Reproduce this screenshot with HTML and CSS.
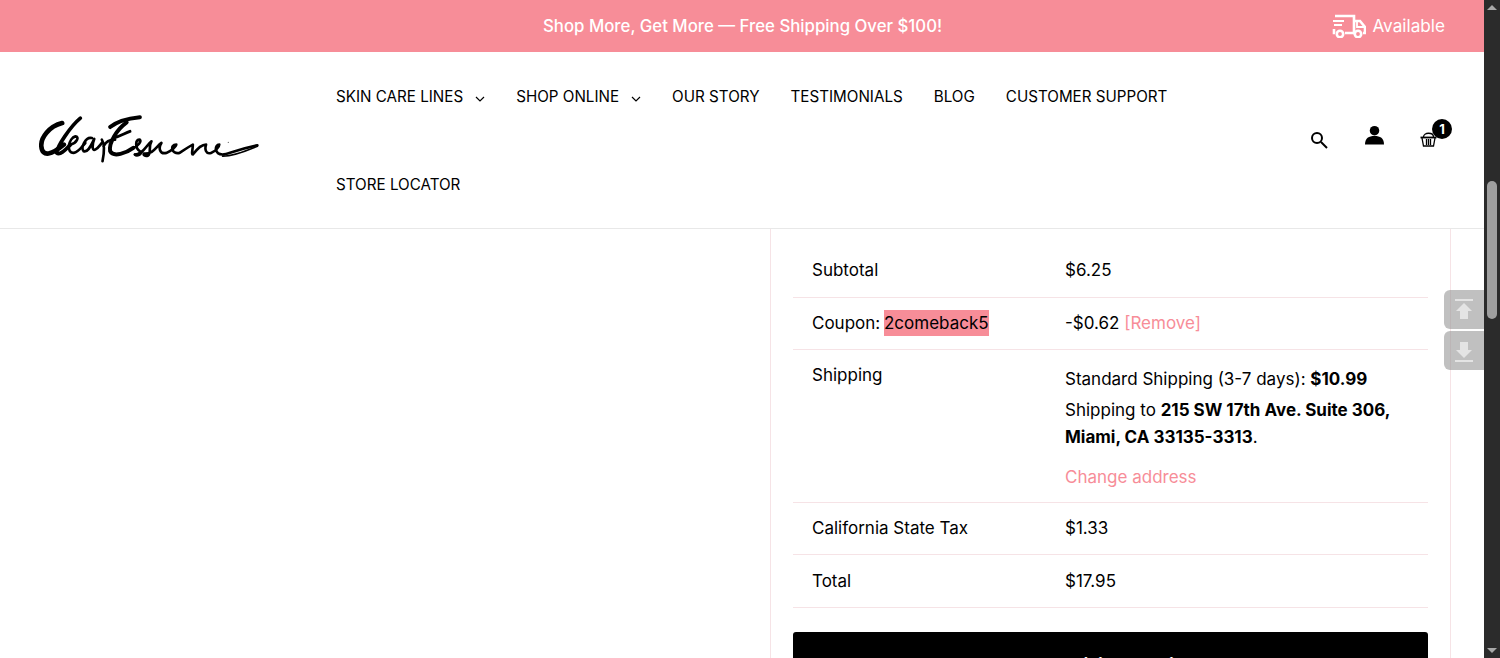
FILE: index.html
```html
<!DOCTYPE html>
<html lang="en">
<head>
  <meta charset="UTF-8" />
  <title>Checkout | Clear Essence</title>
  <link rel="stylesheet" href="styles.css">
</head>
<body>
  <div class="window">
    <div class="page">
      <div class="topbar">
        <p class="promo">Shop More, Get More — Free Shipping Over $100!</p>
        <div class="available">
          <svg class="truck" viewBox="0 0 34 24" fill="none" stroke="#fff" stroke-width="2.6">
            <path d="M3 2h19v17H13" />
            <path d="M22 7h6l5 6v6h-2" />
            <path d="M22 19h-1" />
            <path d="M25 8v5h7" stroke-width="1.8" />
            <path d="M1 7h11M2 11h8" stroke-width="2" />
            <path d="M2 15v4h1" />
            <circle cx="8" cy="20" r="3.2" />
            <circle cx="26" cy="20" r="3.2" />
          </svg>
          <span>Available</span>
        </div>
      </div>

      <header class="navbar">
        <a class="logo" href="#">
          <svg viewBox="55 70 665 150" width="220" height="50" fill="none" stroke="#000" stroke-linecap="round" stroke-linejoin="round">
            <path stroke-width="14" d="M125 100C85 110 60 145 62 170c3 35 33 25 68-5" />
            <path stroke-width="11" d="M180 85c-30 25-70 85-72 105 12 10 32-15 42-25" />
            <path stroke-width="8" d="M150 165c20-5 28-25 15-25-20 5-30 50-5 50 15-2 25-20 35-30" />
            <path stroke-width="8" d="M215 145c-20-5-35 30-25 40 15 5 25-25 32-37-7 17-7 37 3 32 10-5 15-15 20-20" />
            <path stroke-width="8" d="M245 150c10 15 5 50 2 65M250 170c10-20 25-20 35-20" />
            <path stroke-width="12" d="M360 82c-30 3-70 13-90 30" />
            <path stroke-width="12" d="M320 98c-30 22-55 62-50 87 10 20 50 5 70-10" />
            <path stroke-width="9" d="M280 145c20-5 35-15 50-20" />
            <path stroke-width="8" d="M340 175c15-5 25-20 20-25-15 0-15 25 0 35 10 10-10 15-15 10" />
            <path stroke-width="8" d="M345 195c25 0 35-30 50-40-10 15 0 35-10 43-10 4-15-3-13-6 28 3 38-22 53-32-10 15-5 35 15 30 15-5 30-20 30-25-20 0-15 30 10 25 15-10 30-20 40-25 0 15-5 30 0 30 15-20 30-30 40-30-5 15 0 30 15 25 15-5 25-20 25-25-15 0-15 30 10 30 15 0 40-15 105-28" />
            <path stroke-width="5" d="M610 200c30 0 70-15 105-30" />
            <circle cx="627" cy="158" r="1.5" fill="#000" stroke="none" />
          </svg>
        </a>
        <nav class="menu">
          <ul>
            <li><a href="#">SKIN CARE LINES<svg class="chev" viewBox="0 0 10 6"><path d="M1 1l4 4 4-4" /></svg></a></li>
            <li><a href="#">SHOP ONLINE<svg class="chev" viewBox="0 0 10 6"><path d="M1 1l4 4 4-4" /></svg></a></li>
            <li><a href="#">OUR STORY</a></li>
            <li><a href="#">TESTIMONIALS</a></li>
            <li><a href="#">BLOG</a></li>
            <li><a href="#">CUSTOMER SUPPORT</a></li>
            <li><a href="#">STORE LOCATOR</a></li>
          </ul>
        </nav>
        <div class="nav-icons">
          <svg class="icon-search" viewBox="0 0 18 18" fill="none" stroke="#000" stroke-width="2">
            <circle cx="7" cy="7" r="5" />
            <path d="M11 11l6 6" />
          </svg>
          <svg class="icon-user" viewBox="0 0 20 20" fill="#000">
            <circle cx="10" cy="5.5" r="5" />
            <path d="M0 20c0-7 4-9 10-9s10 2 10 9z" />
          </svg>
          <div class="cart">
            <svg class="icon-basket" viewBox="0 0 17 15" fill="none" stroke="#000" stroke-width="1.3">
              <path d="M3.5 5c0-5 10-5 10 0" />
              <path d="M.5 5.5h16" stroke-width="1.8" />
              <path d="M2 6l1.5 8h10L15 6M6.5 7v6M8.5 7v6M10.5 7v6" />
            </svg>
            <span class="cart-count">1</span>
          </div>
        </div>
      </header>

      <main class="content">
        <div class="left"></div>
        <section class="summary">
          <div class="row row-first">
            <div class="label">Subtotal</div>
            <div class="value">$6.25</div>
          </div>
          <div class="row">
            <div class="label">Coupon: <mark>2comeback5</mark></div>
            <div class="value">-$0.62 <a class="pink" href="#">[Remove]</a></div>
          </div>
          <div class="row row-shipping">
            <div class="label">Shipping</div>
            <div class="value">
              <p>Standard Shipping (3-7 days): <b>$10.99</b></p>
              <p>Shipping to <b>215 SW 17th Ave. Suite 306, Miami, CA 33135-3313</b>.</p>
              <a class="pink change" href="#">Change address</a>
            </div>
          </div>
          <div class="row">
            <div class="label">California State Tax</div>
            <div class="value">$1.33</div>
          </div>
          <div class="row row-total">
            <div class="label">Total</div>
            <div class="value">$17.95</div>
          </div>
          <button class="btn">Add billing details</button>
        </section>
      </main>

      <div class="jump">
        <div class="jump-btn">
          <svg viewBox="0 0 18 22" fill="#e4e4e4"><path d="M0 0h18v2H0zM9 4l8 8h-4v8H5v-8H1z" /></svg>
        </div>
        <div class="jump-btn">
          <svg viewBox="0 0 18 22" fill="#e4e4e4"><path d="M0 20h18v2H0zM9 18l8-8h-4V2H5v8H1z" /></svg>
        </div>
      </div>
    </div>

    <div class="scrollbar">
      <span class="arrow arrow-up"></span>
      <div class="track"><div class="thumb"></div></div>
      <span class="arrow arrow-down"></span>
    </div>
  </div>
</body>
</html>
```

FILE: styles.css
```css
* {
  box-sizing: border-box;
}
html, body {
  height: 100%;
  overflow: hidden;
}
body {
  margin: 0;
  background: #fff;
  color: #000;
  font-family: Inter, "Liberation Sans", sans-serif;
}
a {
  color: inherit;
  text-decoration: none;
}
.window {
  display: flex;
  height: 658px;
}
.page {
  flex: 1;
  position: relative;
  overflow: hidden;
}

/* top pink bar */
.topbar {
  height: 52px;
  background: #f78d98;
  color: #fff;
  display: flex;
  align-items: center;
  justify-content: space-between;
  padding: 0 39px 0 543px;
}
.promo {
  margin: 0;
  font-size: 16.8px;
  font-weight: 500;
}
.available {
  display: flex;
  align-items: center;
  gap: 6px;
  font-size: 17.2px;
  margin-top: -1px;
}
.truck {
  width: 34px;
  height: 24px;
}

/* header */
.navbar {
  height: 177px;
  display: flex;
  align-items: center;
  border-bottom: 1px solid #e8e8e8;
  padding-left: 39px;
}
.logo {
  width: 297px;
  display: block;
  flex-shrink: 0;
  margin-top: -5px;
}
.logo svg {
  display: block;
}
.menu {
  width: 975px;
}
.menu ul {
  list-style: none;
  margin: 0;
  padding: 0;
  display: flex;
  flex-wrap: wrap;
  column-gap: 31px;
}
.menu li {
  height: 88px;
  display: flex;
  align-items: center;
  font-size: 15.2px;
}
.chev {
  width: 10px;
  height: 6px;
  margin-left: 12px;
  fill: none;
  stroke: #000;
  stroke-width: 1.2;
}
.nav-icons {
  flex: 1;
  display: flex;
  align-items: center;
  margin-top: -2px;
}
.icon-search {
  width: 18px;
  height: 18px;
  margin: 1px 0 0 -1px;
}
.icon-user {
  width: 19px;
  height: 20px;
  margin: -8px 0 0 37px;
}
.cart {
  position: relative;
  margin: 0 0 0 36px;
  display: flex;
}
.icon-basket {
  width: 17px;
  height: 15px;
}
.cart-count {
  position: absolute;
  top: -13px;
  left: 12px;
  width: 20px;
  height: 20px;
  border-radius: 50%;
  background: #000;
  color: #fff;
  font-size: 13px;
  font-weight: 700;
  line-height: 20px;
  text-align: center;
}

/* order summary */
.content {
  display: flex;
}
.left {
  width: 770px;
}
.summary {
  width: 681px;
  height: 429px;
  padding: 16px 22px 0;
  border-left: 1px solid #f6e3e6;
  border-right: 1px solid #f6e3e6;
  font-size: 17px;
  overflow: hidden;
}
.row {
  display: flex;
  border-bottom: 1px solid #f6e3e6;
  padding: 13px 0 14px 19px;
  line-height: 24px;
}
.row-first {
  padding-bottom: 15px;
}
.row-total {
  padding: 14px 0 14px 19px;
}
.label {
  width: 253px;
  flex-shrink: 0;
}
.value {
  flex: 1;
}
.value p {
  margin: 0;
}
.row-shipping {
  padding: 13px 0 13px 19px;
}
.row-shipping .value {
  width: 330px;
  flex: none;
  padding-top: 4px;
}
.row-shipping p + p {
  margin-top: 6px;
  line-height: 27px;
}
.pink {
  color: #f78d98;
}
.change {
  display: block;
  margin-top: 14px;
}
mark {
  background: #f78d98;
  color: #000;
  margin-left: -1px;
  padding: 3px 0;
}
.btn {
  display: block;
  width: 100%;
  height: 64px;
  margin-top: 24px;
  background: #000;
  color: #fff;
  border: none;
  border-radius: 3px;
  font-family: inherit;
  font-size: 18px;
  font-weight: 700;
}

/* jump to top / bottom buttons */
.jump {
  position: absolute;
  right: 0;
  top: 290px;
  display: flex;
  flex-direction: column;
  gap: 2px;
}
.jump-btn {
  width: 40px;
  height: 39px;
  background: rgba(150, 150, 150, 0.6);
  border-radius: 6px 0 0 6px;
  display: flex;
  align-items: center;
  justify-content: center;
}
.jump-btn svg {
  width: 18px;
  height: 22px;
}

/* browser scrollbar */
.scrollbar {
  width: 16px;
  background: #2b2b2b;
  display: flex;
  flex-direction: column;
  align-items: center;
}
.track {
  flex: 1;
  width: 100%;
  padding-top: 166px;
}
.thumb {
  width: 10px;
  height: 138px;
  margin: 0 auto;
  background: #9f9f9f;
  border-radius: 5px;
}
.arrow {
  width: 0;
  height: 0;
  border-left: 5px solid transparent;
  border-right: 5px solid transparent;
  margin: 5px 0;
}
.arrow-up {
  border-bottom: 5px solid #a8a8a8;
}
.arrow-down {
  border-top: 5px solid #a8a8a8;
}
```
